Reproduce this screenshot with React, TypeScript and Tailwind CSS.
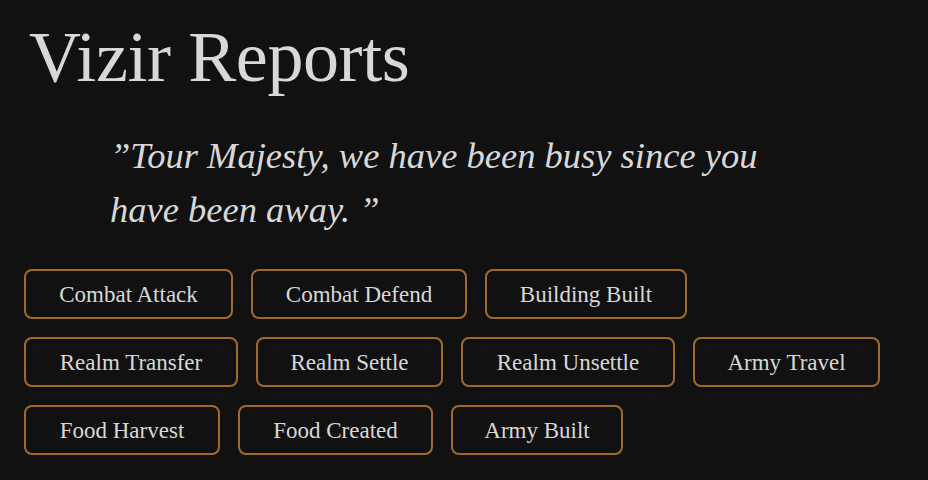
import React from "react";

const rows: { label: string; w: string }[][] = [
  [
    { label: "Combat Attack", w: "w-[209px]" },
    { label: "Combat Defend", w: "w-[216px]" },
    { label: "Building Built", w: "w-[202px]" },
  ],
  [
    { label: "Realm Transfer", w: "w-[214px]" },
    { label: "Realm Settle", w: "w-[187px]" },
    { label: "Realm Unsettle", w: "w-[214px]" },
    { label: "Army Travel", w: "w-[187px]" },
  ],
  [
    { label: "Food Harvest", w: "w-[196px]" },
    { label: "Food Created", w: "w-[195px]" },
    { label: "Army Built", w: "w-[172px]" },
  ],
];

export default function App() {
  return (
    <div
      className="w-[928px] h-[480px] bg-[#111111] text-[#d8d8d8] overflow-hidden"
      style={{ fontFamily: '"Liberation Serif", "DejaVu Serif", serif' }}
    >
      <h1 className="pt-[21px] pl-[29px] text-[72px] leading-[72px] tracking-[-0.4px] font-normal">
        Vizir Reports
      </h1>
      <p className="mt-[36px] ml-[110px] w-[700px] text-[36.5px] leading-[54px] italic">
        ”Tour Majesty, we have been busy since you have been away. ”
      </p>
      <div className="mt-[32px] pl-[24px] flex flex-col gap-[18px]">
        {rows.map((row, i) => (
          <div key={i} className="flex gap-[18px]">
            {row.map((b) => (
              <button
                key={b.label}
                className={`${b.w} h-[50px] border-2 border-[#a06a2a] rounded-lg flex items-center justify-center text-[23px] leading-none text-[#d8d8d8] bg-transparent`}
              >
                {b.label}
              </button>
            ))}
          </div>
        ))}
      </div>
    </div>
  );
}
